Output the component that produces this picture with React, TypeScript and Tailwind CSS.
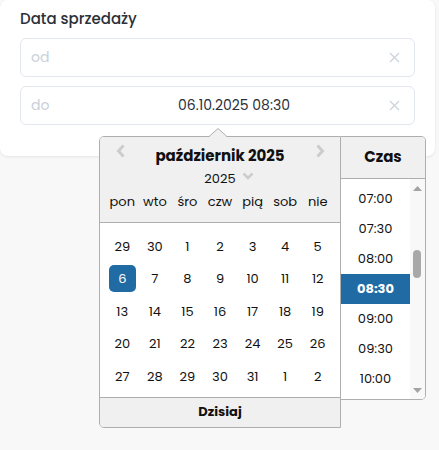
import React from 'react';

const font = { fontFamily: 'Poppins, Inter, "Noto Sans", sans-serif' };

const dayNames = ['pon', 'wto', 'śro', 'czw', 'pią', 'sob', 'nie'];
const weeks = [
  [29, 30, 1, 2, 3, 4, 5],
  [6, 7, 8, 9, 10, 11, 12],
  [13, 14, 15, 16, 17, 18, 19],
  [20, 21, 22, 23, 24, 25, 26],
  [27, 28, 29, 30, 31, 1, 2],
];
const times = ['07:00', '07:30', '08:00', '08:30', '09:00', '09:30', '10:00'];

function ClearIcon() {
  return (
    <svg width="11" height="11" viewBox="0 0 11 11" className="shrink-0">
      <path d="M1 1L10 10M10 1L1 10" stroke="#cdd3dc" strokeWidth="1.3" />
    </svg>
  );
}

function Field({ placeholder, value }: { placeholder: string; value?: string }) {
  return (
    <div className="flex h-[39px] items-center rounded-md border border-[#e3e7ee] bg-white pl-[10px] pr-[14px] text-[14px]">
      <span className="w-[48px] text-[#c9d0da]">{placeholder}</span>
      <span className="flex-1 text-center text-[#2b2f38]">{value}</span>
      <ClearIcon />
    </div>
  );
}

export default function App() {
  return (
    <div className="relative h-[450px] w-[439px] overflow-hidden bg-[#f8f8f8]" style={font}>
      <div className="h-[156px] w-[435px] rounded-lg bg-white px-5 pt-[8px] shadow-[0_1px_3px_rgba(0,0,0,0.08)]">
        <div className="text-[15px] font-medium leading-[22px] text-[#2c3038]">Data sprzedaży</div>
        <div className="mt-[8px] flex flex-col gap-[9px]">
          <Field placeholder="od" />
          <Field placeholder="do" value="06.10.2025 08:30" />
        </div>
      </div>

      {/* datepicker popup */}
      <div className="absolute left-[99px] top-[128px]">
        <svg width="18" height="9" viewBox="0 0 18 9" className="absolute left-[110px] top-0 z-10">
          <path d="M0 9L9 0.5L18 9Z" fill="#f0f0f0" />
          <path d="M0 8.5L9 0.5L18 8.5" stroke="#aeaeae" fill="none" strokeWidth="1" />
        </svg>
        <div className="mt-[8px] flex items-start">
          <div className="w-[242px] overflow-hidden rounded-l-[5px] border border-[#aeaeae] bg-white">
            <div className="relative h-[86px] border-b border-[#aeaeae] bg-[#f0f0f0]">
              <svg width="10" height="14" viewBox="0 0 10 14" className="absolute left-[16px] top-[7px]">
                <path d="M7.5 1.5L2.5 7L7.5 12.5" stroke="#cccccc" strokeWidth="3" fill="none" />
              </svg>
              <svg width="10" height="14" viewBox="0 0 10 14" className="absolute right-[15px] top-[7px]">
                <path d="M2.5 1.5L7.5 7L2.5 12.5" stroke="#cccccc" strokeWidth="3" fill="none" />
              </svg>
              <div className="pt-[8px] text-center text-[15px] font-bold leading-[22px] text-[#111]">
                październik 2025
              </div>
              <div className="mt-[2px] flex h-[20px] items-center justify-center gap-[6px] pl-[18px] text-[13px] text-[#111]">
                <span>2025</span>
                <svg width="12" height="8" viewBox="0 0 12 8" className="mb-[6px]">
                  <path d="M1.5 1.5L6 6L10.5 1.5" stroke="#cccccc" strokeWidth="2.6" fill="none" />
                </svg>
              </div>
              <div className="mt-[1px] grid grid-cols-7 px-[6px] text-center text-[13px] leading-[24px] text-[#111]">
                {dayNames.map((d) => (
                  <span key={d}>{d}</span>
                ))}
              </div>
            </div>
            <div className="px-[6px] pb-[4px] pt-[7px]">
              {weeks.map((w, i) => (
                <div key={i} className="grid h-[32.5px] grid-cols-7 items-center text-center text-[13px] text-[#111]">
                  {w.map((d, j) => {
                    const sel = i === 1 && j === 0;
                    return (
                      <div key={j} className="flex justify-center">
                        <span
                          className={
                            sel
                              ? 'flex h-[27px] w-[27px] items-center justify-center rounded-[5px] bg-[#216ba5] text-white'
                              : 'flex h-[27px] w-[27px] items-center justify-center'
                          }
                        >
                          {d}
                        </span>
                      </div>
                    );
                  })}
                </div>
              ))}
            </div>
            <div className="flex h-[30px] items-center justify-center border-t border-[#aeaeae] bg-[#f0f0f0] text-[13px] font-bold text-[#111]">
              Dzisiaj
            </div>
          </div>

          <div className="h-[264px] w-[85px] overflow-hidden rounded-r-[5px] border border-l-0 border-[#aeaeae] bg-white">
            <div className="flex h-[42px] items-center justify-center border-b border-[#aeaeae] bg-[#f0f0f0] text-[15px] font-bold text-[#111]">
              Czas
            </div>
            <div className="flex">
              <div className="w-[69px] pt-[5px] text-center text-[13px] text-[#111]">
                {times.map((t) => (
                  <div
                    key={t}
                    className={
                      t === '08:30'
                        ? 'flex h-[30px] items-center justify-center bg-[#216ba5] font-bold text-white'
                        : 'flex h-[30px] items-center justify-center'
                    }
                  >
                    {t}
                  </div>
                ))}
              </div>
              <div className="relative h-[220px] w-[15px] bg-[#f8f8f8]">
                <svg width="9" height="5" viewBox="0 0 9 5" className="absolute left-[3px] top-[7px]">
                  <path d="M0 5L4.5 0L9 5Z" fill="#a3a3a3" />
                </svg>
                <div className="absolute left-[3px] top-[71px] h-[28px] w-[8px] rounded-full bg-[#a8a8a8]" />
                <svg width="9" height="5" viewBox="0 0 9 5" className="absolute left-[3px] top-[209px]">
                  <path d="M0 0L4.5 5L9 0Z" fill="#a3a3a3" />
                </svg>
              </div>
            </div>
          </div>
        </div>
      </div>
    </div>
  );
}
